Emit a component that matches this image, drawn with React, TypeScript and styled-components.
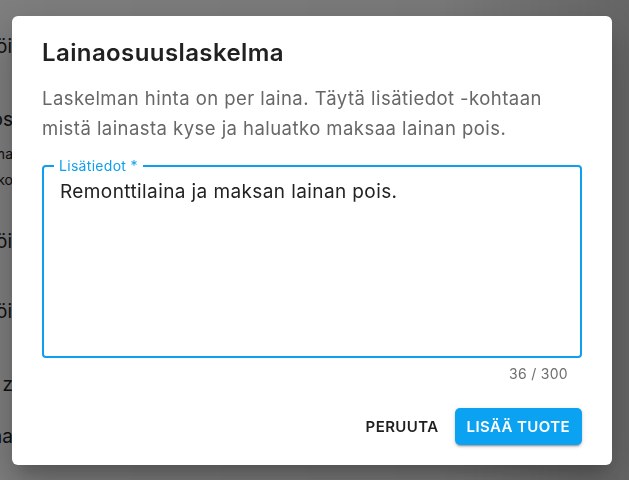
import React, { useState } from 'react'
import styled, { createGlobalStyle } from 'styled-components'

const GlobalStyle = createGlobalStyle`
  html, body {
    margin: 0;
    padding: 0;
    width: 100%;
    height: 100%;
    overflow: hidden;
    background: #ffffff;
    font-family: Inter, 'Noto Sans', sans-serif;
  }
`

const Page = styled.div`
  width: 629px;
  height: 480px;
  display: flex;
  flex-direction: column;
  padding-top: 36px;
  box-sizing: border-box;
`

const PageLine = styled.div<{ $gap: number; $size?: number; $width?: number }>`
  width: ${({ $width }) => $width ?? 13}px;
  margin-top: ${({ $gap }) => $gap}px;
  display: flex;
  justify-content: flex-end;
  overflow: hidden;
  white-space: nowrap;
  font-size: ${({ $size }) => $size ?? 19}px;
  line-height: 22px;
  color: #222;
`

const Backdrop = styled.div`
  position: fixed;
  inset: 0;
  background: linear-gradient(90deg, rgba(0, 0, 0, 0.5) 0%, rgba(0, 0, 0, 0.52) 70%, rgba(0, 0, 0, 0.6) 100%);
`

const Dialog = styled.div`
  position: fixed;
  left: 12px;
  top: 16px;
  width: 600px;
  height: 449px;
  box-sizing: border-box;
  background: #fff;
  border-radius: 6px;
  box-shadow: 0 11px 15px -7px rgba(0, 0, 0, 0.2), 0 24px 38px 3px rgba(0, 0, 0, 0.14),
    0 9px 46px 8px rgba(0, 0, 0, 0.12);
  padding: 21px 30px 0 30px;
  display: flex;
  flex-direction: column;
`

const Title = styled.h2`
  margin: 0;
  font-size: 24px;
  line-height: 32px;
  font-weight: 600;
  color: #212121;
  letter-spacing: 0.4px;
`

const Description = styled.p`
  margin: 14px 0 0 0;
  font-size: 18.5px;
  line-height: 30px;
  letter-spacing: 0.45px;
  color: #676767;
`

const Field = styled.fieldset`
  margin: 15px 0 0 0;
  padding: 0 16px;
  height: 200px;
  box-sizing: border-box;
  border: 2px solid #0ea0ec;
  border-radius: 4px;
  display: flex;
  flex-direction: column;
`

const Legend = styled.legend`
  padding: 0 5px;
  margin-left: -6px;
  font-size: 14px;
  line-height: 16px;
  letter-spacing: 0.3px;
  color: #0ea0ec;
`

const TextArea = styled.textarea`
  margin-top: 5px;
  flex: 1;
  border: none;
  outline: none;
  resize: none;
  padding: 0;
  font-family: inherit;
  font-size: 19px;
  line-height: 26px;
  letter-spacing: 0.4px;
  color: #222;
  background: transparent;
`

const Counter = styled.div`
  margin-top: 6px;
  padding-right: 14px;
  text-align: right;
  font-size: 14px;
  line-height: 20px;
  letter-spacing: 0.3px;
  color: #6e6e6e;
`

const Actions = styled.div`
  margin-top: 24px;
  display: flex;
  justify-content: flex-end;
  align-items: center;
  gap: 8px;
`

const Button = styled.button<{ $primary?: boolean }>`
  height: 37px;
  padding: 0 ${({ $primary }) => ($primary ? 12 : 8)}px;
  border: none;
  border-radius: 5px;
  font-family: inherit;
  font-size: 15px;
  font-weight: 600;
  letter-spacing: 0.4px;
  cursor: pointer;
  color: ${({ $primary }) => ($primary ? '#fff' : '#1f1f1f')};
  background: ${({ $primary }) => ($primary ? '#0ba2f1' : 'transparent')};
  box-shadow: ${({ $primary }) =>
    $primary
      ? '0 3px 1px -2px rgba(0,0,0,0.2), 0 2px 2px 0 rgba(0,0,0,0.14), 0 1px 5px 0 rgba(0,0,0,0.12)'
      : 'none'};
`

const backgroundLines = [
  { text: 'Lisää töitä', gap: 0, width: 29 },
  { text: 'Kustannukset koos', gap: 51 },
  { text: 'Laina ma', gap: 12, size: 14 },
  { text: 'Tiliko', gap: 4, size: 14 },
  { text: 'Lisää töitä', gap: 40, width: 29 },
  { text: 'Lisää töitä', gap: 48, width: 29 },
  { text: 'Yhteensä z', gap: 51 },
  { text: 'Laina', gap: 30 },
]

export default function App() {
  const [value, setValue] = useState('Remonttilaina ja maksan lainan pois.')

  return (
    <>
      <GlobalStyle />
      <Page>
        {backgroundLines.map((line, i) => (
          <PageLine key={i} $gap={line.gap} $size={line.size} $width={line.width}>
            {line.text}
          </PageLine>
        ))}
      </Page>
      <Backdrop />
      <Dialog>
        <Title>Lainaosuuslaskelma</Title>
        <Description>
          Laskelman hinta on per laina. Täytä lisätiedot -kohtaan mistä lainasta kyse ja haluatko maksaa lainan pois.
        </Description>
        <Field>
          <Legend>Lisätiedot *</Legend>
          <TextArea value={value} maxLength={300} onChange={e => setValue(e.target.value)} />
        </Field>
        <Counter>{value.length} / 300</Counter>
        <Actions>
          <Button>PERUUTA</Button>
          <Button $primary>LISÄÄ TUOTE</Button>
        </Actions>
      </Dialog>
    </>
  )
}
